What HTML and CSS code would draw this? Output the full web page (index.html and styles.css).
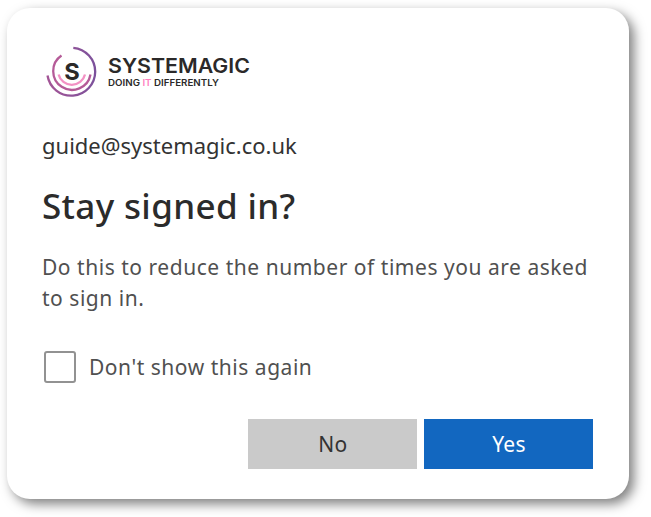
FILE: index.html
```
<!DOCTYPE html>
<html lang="en">
<head>
    <meta charset="UTF-8">
    <meta name="viewport" content="width=device-width, initial-scale=1.0">
    <title>Stay signed in?</title>
    <link rel="stylesheet" href="styles.css">
</head>
<body>

    <main class="card">
        <div class="logo">
            <svg class="logo-mark" width="54" height="54" viewBox="0 0 54 54" fill="none" stroke-width="2.3">
                <defs>
                    <linearGradient id="outer" x1="0" y1="0" x2="1" y2="0">
                        <stop offset="0" stop-color="#a35596"/>
                        <stop offset="1" stop-color="#7c519b"/>
                    </linearGradient>
                </defs>
                <path d="M28.3 1.8A24 24 0 1 1 2.5 29.5" stroke="url(#outer)"/>
                <path d="M16.5 9.5A18.8 18.8 0 1 0 45.5 28.5" stroke="#b55b98"/>
                <path d="M13.6 28.5A13.6 13.6 0 0 0 40 28.5" stroke="#f391c4"/>
                <text class="logo-letter" x="27" y="33.5" text-anchor="middle" textLength="15.5" lengthAdjust="spacingAndGlyphs">S</text>
            </svg>
            <svg class="logo-text" width="150" height="38" viewBox="0 0 150 38">
                <text class="logo-name" x="0" y="21" textLength="142" lengthAdjust="spacingAndGlyphs">SYSTEMAGIC</text>
                <text class="logo-tagline" x="0" y="34.2" textLength="111" lengthAdjust="spacingAndGlyphs">DOING <tspan class="pink">IT</tspan> DIFFERENTLY</text>
            </svg>
        </div>

        <div class="email">guide@systemagic.co.uk</div>
        <h1>Stay signed in?</h1>
        <p>Do this to reduce the number of times you are asked<br>to sign in.</p>

        <label class="remember">
            <input type="checkbox">
            <span>Don't show this again</span>
        </label>

        <div class="buttons">
            <button class="no">No</button>
            <button class="yes">Yes</button>
        </div>
    </main>

</body>
</html>
```
FILE: styles.css
```
* {
    box-sizing: border-box;
}

body {
    margin: 0;
    padding: 8px 0 0 7px;
    height: 517px;
    overflow: hidden;
    background-color: #fff;
    font-family: 'Noto Sans', 'Open Sans', sans-serif;
    color: #333;
}

.card {
    width: 622px;
    height: 491px;
    padding: 38px 36px 30px 35px;
    display: flex;
    flex-direction: column;
    background-color: #fff;
    border-radius: 23px;
    box-shadow: 5px 5px 12px rgba(0, 0, 0, 0.5);
}

.logo {
    display: flex;
    height: 54px;
    padding-left: 3px;
}

.logo-text {
    margin: 6px 0 0 9px;
    overflow: visible;
}

.logo-letter,
.logo-name,
.logo-tagline {
    font-family: Inter, sans-serif;
    fill: #2b2929;
    stroke: none;
}

.logo-letter {
    font-size: 23px;
    font-weight: 700;
}

.logo-name {
    font-size: 20px;
    font-weight: 600;
}

.logo-tagline {
    font-size: 9px;
    font-weight: 600;
}

.pink {
    fill: #ff7fc0;
}

.email {
    height: 30px;
    margin-top: 30px;
    line-height: 30px;
    font-size: 22px;
}

h1 {
    height: 46px;
    margin: 23px 0 0;
    line-height: 46px;
    font-size: 35px;
    font-weight: 500;
    letter-spacing: 0.35px;
    color: #2b2b2b;
}

p {
    margin: 23px 0 0;
    line-height: 31px;
    font-size: 21px;
    letter-spacing: 0.53px;
    color: #505050;
    white-space: nowrap;
}

.remember {
    display: flex;
    align-items: center;
    height: 32px;
    margin: 37px 0 0 2px;
    font-size: 21px;
    letter-spacing: 0.53px;
    color: #505050;
}

.remember input {
    appearance: none;
    width: 32px;
    height: 32px;
    margin: 0 13px 0 0;
    border: 2px solid #929292;
    border-radius: 3px;
}

.buttons {
    display: flex;
    justify-content: flex-end;
    gap: 7px;
    margin-top: auto;
}

button {
    width: 169px;
    height: 50px;
    padding: 0 0 0 1px;
    border: none;
    font-family: inherit;
    font-size: 21px;
    letter-spacing: 0.3px;
}

.no {
    background-color: #cacaca;
    color: #333;
}

.yes {
    background-color: #1267c0;
    color: #fff;
}
```
